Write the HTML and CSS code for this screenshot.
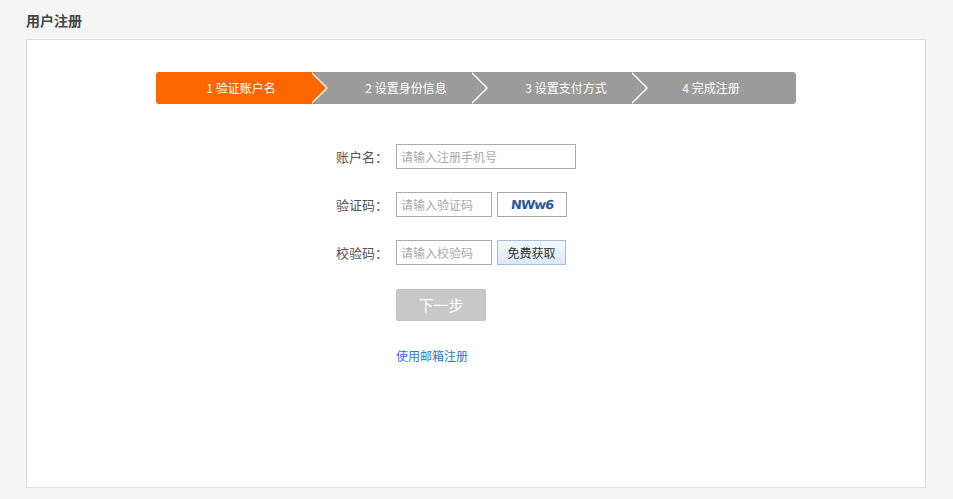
FILE: index.html
```html
<!DOCTYPE html>
<html lang="zh-CN">
<head>
<meta charset="utf-8">
<title>用户注册</title>
<link rel="stylesheet" href="styles.css">
</head>
<body>
<div class="page">
  <h1 class="title">用户注册</h1>
  <div class="panel">
    <div class="steps">
      <div class="step step-active step-1"><span>1 验证账户名</span></div>
      <div class="step step-2"><span>2 设置身份信息</span></div>
      <div class="step step-3"><span>3 设置支付方式</span></div>
      <div class="step step-4"><span>4 完成注册</span></div>
    </div>
    <form class="form">
      <div class="row">
        <label class="label">账户名：</label>
        <input class="input input-wide" type="text" placeholder="请输入注册手机号">
      </div>
      <div class="row">
        <label class="label">验证码：</label>
        <input class="input input-short" type="text" placeholder="请输入验证码">
        <div class="captcha"><span>NWw6</span></div>
      </div>
      <div class="row">
        <label class="label">校验码：</label>
        <input class="input input-short" type="text" placeholder="请输入校验码">
        <button type="button" class="btn-code">免费获取</button>
      </div>
      <div class="row row-action">
        <button type="button" class="btn-next">下一步</button>
      </div>
      <div class="row row-link">
        <a class="link" href="#">使用邮箱注册</a>
      </div>
    </form>
  </div>
</div>
</body>
</html>
```

FILE: styles.css
```css
* { box-sizing: border-box; }
html, body {
  margin: 0;
  padding: 0;
  background: #f5f5f5;
  font-family: "Noto Sans CJK SC", "Noto Sans", sans-serif;
  color: #333;
}
.page {
  padding: 10px 27px 11px 26px;
}
.title {
  margin: 0;
  font-size: 14px;
  line-height: 20px;
  height: 29px;
  font-weight: bold;
  color: #444;
}
.panel {
  background: #fff;
  border: 1px solid #dcdcdc;
  height: 449px;
  padding-top: 32px;
}
.steps {
  width: 640px;
  height: 32px;
  margin: 0 auto;
  display: flex;
  border-radius: 3px;
  overflow: hidden;
}
.step {
  position: relative;
  width: 160px;
  height: 32px;
  background: #9b9b9b;
  color: #fff;
  font-size: 12px;
  line-height: 32px;
  text-align: center;
}
.step-active { background: #ff6600; }
.step-1 { padding-left: 10px; }
.step-2, .step-3 { padding-left: 20px; }
.step-4 { padding-right: 10px; }
.step:not(.step-4)::before,
.step:not(.step-4)::after {
  content: "";
  position: absolute;
  top: 0;
  width: 0;
  height: 0;
  border-top: 16px solid transparent;
  border-bottom: 16px solid transparent;
}
.step:not(.step-4)::before {
  left: 156px;
  border-left: 16px solid #fff;
  z-index: 1;
}
.step:not(.step-4)::after {
  left: 154px;
  border-left: 16px solid #9b9b9b;
  z-index: 2;
}
.step-active:not(.step-4)::after { border-left-color: #ff6600; }
.step span { position: relative; z-index: 3; }

.form {
  margin: 40px 0 0 281px;
}
.row {
  display: flex;
  align-items: center;
  height: 25px;
  margin-bottom: 23px;
}
.label {
  width: 82px;
  padding-right: 2px;
  text-align: right;
  font-size: 13px;
  color: #555;
  margin-right: 6px;
}
.input {
  height: 25px;
  border: 1px solid #ababab;
  padding: 0 4px;
  font-size: 12px;
  font-family: "Noto Sans CJK SC", sans-serif;
  color: #333;
  outline: none;
}
.input::placeholder { color: #aaa; }
.input-wide { width: 180px; }
.input-short { width: 96px; }
.captcha {
  margin-left: 5px;
  width: 70px;
  height: 25px;
  border: 1px solid #a6a6a6;
  display: flex;
  align-items: center;
  justify-content: center;
}
.captcha span {
  font-family: "DejaVu Sans", sans-serif;
  font-weight: bold;
  font-size: 13px;
  letter-spacing: -1px;
  color: #2c5a9c;
  transform: skewX(-6deg) scaleY(0.95);
}
.btn-code {
  margin-left: 5px;
  width: 69px;
  height: 25px;
  border: 1px solid #a4bcd7;
  background: linear-gradient(#f4f8fd, #dde8f6);
  font-size: 12px;
  font-family: "Noto Sans CJK SC", sans-serif;
  color: #333;
  padding: 0;
}
.row-action {
  height: 33px;
  margin-bottom: 26px;
  padding-left: 88px;
}
.btn-next {
  width: 90px;
  height: 32px;
  border: 1px solid #c2c2c2;
  border-radius: 2px;
  background: #c8c8c8;
  color: #fff;
  font-size: 15px;
  font-family: "Noto Sans CJK SC", sans-serif;
  padding: 0;
}
.row-link {
  padding-left: 88px;
  height: 17px;
}
.link {
  font-size: 12px;
  color: #2a78d0;
  text-decoration: none;
}
```
